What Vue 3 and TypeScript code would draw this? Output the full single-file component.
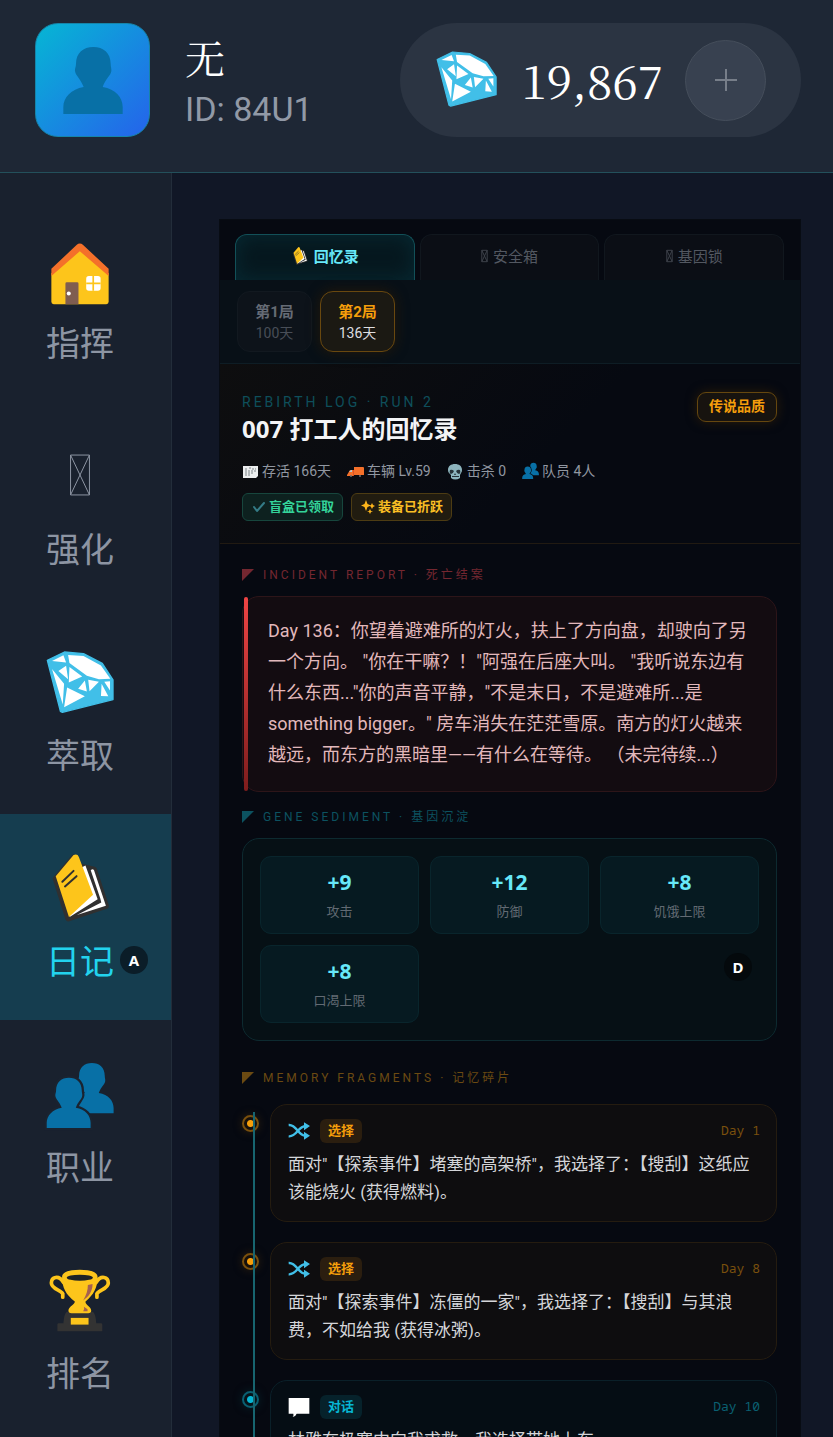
<script setup lang="ts">
interface NavItem { label: string; icon: string; active?: boolean; hint?: string }
interface Entry { kind: 'choice' | 'talk'; tag: string; icon: string; day: number; text: string }

const nav: NavItem[] = [
  { label: '指挥', icon: 'house' },
  { label: '强化', icon: 'tofu' },
  { label: '萃取', icon: 'gem' },
  { label: '日记', icon: 'book', active: true, hint: 'A' },
  { label: '职业', icon: 'people' },
  { label: '排名', icon: 'trophy' },
]
const tabs = [
  { label: '回忆录', icon: 'book', active: true },
  { label: '安全箱', icon: 'tofu', active: false },
  { label: '基因锁', icon: 'tofu', active: false },
]
const runs = [
  { name: '第1局', days: '100天', active: false },
  { name: '第2局', days: '136天', active: true },
]
const meta = [
  { icon: 'calendar', text: '存活 166天' },
  { icon: 'truck', text: '车辆 Lv.59' },
  { icon: 'skull', text: '击杀 0' },
  { icon: 'people', text: '队员 4人' },
]
const genes = [
  { value: '+9', label: '攻击' },
  { value: '+12', label: '防御' },
  { value: '+8', label: '饥饿上限' },
  { value: '+8', label: '口渴上限' },
]
const entries: Entry[] = [
  { kind: 'choice', tag: '选择', icon: 'shuffle', day: 1, text: '面对"【探索事件】堵塞的高架桥"，我选择了：【搜刮】这纸应该能烧火 (获得燃料)。' },
  { kind: 'choice', tag: '选择', icon: 'shuffle', day: 8, text: '面对"【探索事件】冻僵的一家"，我选择了：【搜刮】与其浪费，不如给我 (获得冰粥)。' },
  { kind: 'talk', tag: '对话', icon: 'speech', day: 10, text: '林雅在极寒中向我求救，我选择带她上车。' },
]
</script>

<template>
  <div class="app">
    <svg class="sprite" aria-hidden="true">
      <symbol id="bust" viewBox="188 140 178 201">
        <path d="M278 140C308 140 330 158 330 190C330 200 333 205 332 212C331 225 314 236 306 260C345 266 366 292 366 320V341H188V320C188 292 212 266 249 260C240 236 224 225 223 212C222 205 226 200 226 190C226 158 248 140 278 140Z" fill="#0870a6" />
      </symbol>
      <symbol id="people" viewBox="140 72 204 200" preserveAspectRatio="xMidYMin meet">
        <g fill="#0870a6">
          <path transform="translate(72 -36) scale(.74 .75)" d="M278 140C308 140 330 158 330 190C330 200 333 205 332 212C331 225 314 236 306 260C345 266 366 292 366 320V341H188V320C188 292 212 266 249 260C240 236 224 225 223 212C222 205 226 200 226 190C226 158 248 140 278 140Z" />
          <path class="cut" transform="translate(3 8) scale(.74 .75)" d="M278 140C308 140 330 158 330 190C330 200 333 205 332 212C331 225 314 236 306 260C345 266 366 292 366 320V341H188V320C188 292 212 266 249 260C240 236 224 225 223 212C222 205 226 200 226 190C226 158 248 140 278 140Z" />
        </g>
      </symbol>
      <symbol id="gem" viewBox="140 97 203 186" preserveAspectRatio="xMidYMin meet">
        <path d="M144 122L195 97L252 102L308 131L340 180V239L189 277L183 274Z" fill="#41bfe8" stroke="#41bfe8" stroke-width="4" stroke-linejoin="round" />
        <path fill="#fff" d="M158 124L192 107L200 128ZM206 106L252 109L304 137L332 177L298 178L262 168L210 130ZM177 154L200 138L206 178ZM210 142L248 170L208 188ZM158 148L194 192L190 254ZM203 203L256 229L194 262ZM256 182L262 215L236 207ZM266 180L298 186L270 214ZM306 192L326 229L304 228ZM314 186L331 184V212Z" />
      </symbol>
      <symbol id="house" viewBox="140 62 203 200">
        <path fill="#fdc51b" d="M241 90L327 160V245q0 7-7 7H163q-7 0-7-7V160Z" />
        <path fill="#f4702a" d="M241 71Q246 71 250 75L327 146V168L241 94L156 168V146L232 75Q236 71 241 71Z" />
        <path fill="#7f5d50" d="M198 252V191q0-4 4-4h31q4 0 4 4v61Z" />
        <circle cx="208" cy="220" r="6" fill="#fff" />
        <rect x="260" y="168" width="43" height="44" rx="8" fill="#fff" />
        <path d="M281 168V212M260 190H303" stroke="#fdc51b" stroke-width="5" />
      </symbol>
      <symbol id="tofu" viewBox="0 0 20 40">
        <path d="M1 1H19V39H1L19 1M1 1L19 39M1 1V39" fill="none" stroke="currentColor" stroke-width="1" vector-effect="non-scaling-stroke" />
      </symbol>
      <symbol id="book" viewBox="140 713 203 206">
        <path d="M168 776L222 712L240 738L284 748L320 858L206 896Z" fill="#303030" stroke="#303030" stroke-width="18" stroke-linejoin="round" />
        <path fill="#fff" d="M274 750Q280 744 284 750L320 858L232 886L306 848L303 836ZM246 742L258 736L295 838L210 892Z" />
        <path fill="#fdc51b" d="M168 768L222 704Q234 699 238 710L281 824L208 892Z" />
        <path d="M188 785L222 752M196 799L231 768" stroke="#303030" stroke-width="6" stroke-linecap="round" />
      </symbol>
      <symbol id="trophy" viewBox="140 691 203 196" preserveAspectRatio="xMidYMin meet">
        <path fill="#333" d="M202 816H280Q288 822 290 850H304Q308 850 308 854V874H174V854Q174 850 178 850H192Q194 822 202 816Z" />
        <rect x="214" y="834" width="53" height="20" fill="#fdc51b" />
        <path d="M192 728C178 704 156 712 156 730C156 748 184 750 190 762V772M290 728C304 704 326 712 326 730C326 748 298 750 292 762V772" fill="none" stroke="#fdc51b" stroke-width="11" stroke-linecap="round" />
        <path fill="#fdc51b" d="M188 712C188 696 212 690 241 690S294 696 294 712C294 745 282 765 258 785C256 795 275 800 275 812Q275 820 266 820H216Q207 820 207 812C207 800 226 795 226 785C200 765 188 745 188 712Z" />
        <ellipse cx="241" cy="714" rx="39" ry="9" fill="#1d2226" />
        <path fill="#a56150" d="M265 736L279 733C279 755 268 770 251 782C261 765 265 752 265 736ZM253 801L264 808V814H251Q256 808 253 801Z" />
      </symbol>
      <symbol id="calendar" viewBox="0 0 17 17">
        <path fill="#eceeef" d="M1 3H16V13L14 15H1Z" />
        <path d="M3 6H6M10 6H14M3 8H14M3 10H12M3 12H8M8 4V6" stroke="#7d8588" stroke-width="1" stroke-dasharray="2 1" />
      </symbol>
      <symbol id="truck" viewBox="0 0 17 17">
        <path fill="#f4702a" d="M7 4L16 4Q17 4 17 5V12H7ZM0 12L3 7H6V13H0Z" />
        <path fill="#b8c6ca" d="M2 9L4 7H5V9Z" />
        <path fill="#dc5328" d="M6 7H7V13H6Z" />
        <circle cx="4" cy="13" r="1" fill="#707070" /><circle cx="13" cy="13" r="1" fill="#707070" />
      </symbol>
      <symbol id="skull" viewBox="0 0 17 17">
        <path fill="#8db4bd" d="M8 1C12 1 15 3 15 7Q15 9 14 10L13 12V15Q8 18 4 15V12L2 10Q1 9 1 7C1 3 4 1 8 1Z" />
        <path fill="#263238" d="M3 7Q5 6 7 8Q6 11 4 11Q2 10 3 7ZM13 7Q11 6 9 8Q10 11 12 11Q14 10 13 7ZM8 10L9 12H7ZM5 13H12V14H5Z" />
      </symbol>
      <symbol id="check" viewBox="0 0 14 14">
        <path d="M2 7L5 11L12 3" fill="none" stroke="#347b86" stroke-width="2" stroke-linecap="round" stroke-linejoin="round" />
      </symbol>
      <symbol id="sparkles" viewBox="0 0 14 14">
        <path fill="#fdb51b" d="M5 0L6.500 4L10 5.500L6.500 7L5 11L3.500 7L0 5.500L3.500 4ZM11 3L12 5L14 6L12 7L11 9L10 7L9 6L10 5ZM9 9L10 11L12 11.500L10 12L9 14L8 12L6 11.500L8 11Z" />
      </symbol>
      <symbol id="shuffle" viewBox="0 0 66 48">
        <path d="M2 6C28 4 30 41 54 38M2 40C28 42 28 10 54 9" fill="none" stroke="#41bfe8" stroke-width="7" />
        <path fill="#41bfe8" d="M48 -2L66 9L48 22ZM48 26L66 38L48 50Z" />
      </symbol>
      <symbol id="speech" viewBox="0 0 66 60">
        <path fill="#fff" d="M2 3H64V50H26Q22 60 14 59Q18 56 16 50H2Z" />
      </symbol>
    </svg>

    <header class="topbar">
      <div class="avatar"><svg><use href="#bust" /></svg></div>
      <div class="identity">
        <div class="nick">无</div>
        <div class="uid">ID: 84U1</div>
      </div>
      <div class="wallet">
        <svg class="wallet-gem"><use href="#gem" /></svg>
        <span class="amount">19,867</span>
        <button class="plus" aria-label="充值"><svg viewBox="0 0 22 22"><path d="M11 0V22M0 11H22" /></svg></button>
      </div>
    </header>

    <div class="body">
      <nav class="side">
        <button v-for="n in nav" :key="n.label" class="nav-item" :class="{ active: n.active }">
          <svg class="nav-icon" :class="n.icon"><use :href="'#' + n.icon" /></svg>
          <span class="nav-label">{{ n.label }}</span>
          <span v-if="n.hint" class="key key-nav">{{ n.hint }}</span>
        </button>
      </nav>

      <main class="main">
        <div class="panel">
          <div class="tabs" role="tablist">
            <button v-for="t in tabs" :key="t.label" class="tab" role="tab" :aria-selected="t.active" :class="{ active: t.active }">
              <svg class="tab-icon" :class="t.icon"><use :href="'#' + t.icon" /></svg>{{ t.label }}
            </button>
          </div>
          <div class="runs">
            <button v-for="r in runs" :key="r.name" class="run" :class="{ active: r.active }">
              <strong>{{ r.name }}</strong>
              <span>{{ r.days }}</span>
            </button>
          </div>

          <section class="log">
            <div class="log-head">
              <div>
                <div class="eyebrow">REBIRTH LOG · RUN 2</div>
                <h1>007 打工人的回忆录</h1>
              </div>
              <span class="rarity">传说品质</span>
            </div>
            <ul class="meta">
              <li v-for="m in meta" :key="m.icon"><svg><use :href="'#' + m.icon" /></svg>{{ m.text }}</li>
            </ul>
            <div class="badges">
              <span class="badge green"><svg><use href="#check" /></svg>盲盒已领取</span>
              <span class="badge gold"><svg><use href="#sparkles" /></svg>装备已折跃</span>
            </div>
          </section>

          <div class="content">
            <h2 class="label red"><i></i>INCIDENT REPORT · 死亡结案</h2>
            <p class="incident">Day 136：你望着避难所的灯火，扶上了方向盘，却驶向了另一个方向。 "你在干嘛？！"阿强在后座大叫。 "我听说东边有什么东西..."你的声音平静，"不是末日，不是避难所...是 something bigger。" 房车消失在茫茫雪原。南方的灯火越来越远，而东方的黑暗里——有什么在等待。 （未完待续...）</p>

            <h2 class="label cyan"><i></i>GENE SEDIMENT · 基因沉淀</h2>
            <div class="genes">
              <div v-for="g in genes" :key="g.label" class="gene">
                <strong>{{ g.value }}</strong>
                <span>{{ g.label }}</span>
              </div>
              <span class="key key-panel">D</span>
            </div>

            <h2 class="label amber"><i></i>MEMORY FRAGMENTS · 记忆碎片</h2>
            <ol class="timeline">
              <li v-for="e in entries" :key="e.day" class="entry" :class="e.kind">
                <span class="dot"></span>
                <article class="card">
                  <div class="card-head">
                    <svg><use :href="'#' + e.icon" /></svg>
                    <span class="tag">{{ e.tag }}</span>
                    <time>Day {{ e.day }}</time>
                  </div>
                  <p>{{ e.text }}</p>
                </article>
              </li>
            </ol>
          </div>
        </div>
      </main>
    </div>
  </div>
</template>

<style>
body { margin: 0; background: #111726; }
</style>

<style scoped>
* { box-sizing: border-box; }
button { font: inherit; color: inherit; background: none; border: 0; padding: 0; cursor: pointer; }
h1, h2, p, ul, ol { margin: 0; padding: 0; list-style: none; }
svg { display: block; flex: none; overflow: visible; }
symbol { overflow: visible; }

.app {
  --cut: #1a2330;
  height: 100vh;
  display: flex;
  flex-direction: column;
  overflow: hidden;
  background: #111726;
  color: #fff;
  font-family: Roboto, "Noto Sans CJK SC", sans-serif;
}
.sprite { position: absolute; width: 0; height: 0; overflow: hidden; }
.cut { stroke: var(--cut); stroke-width: 18px; paint-order: stroke; }

.topbar {
  display: flex;
  align-items: center;
  padding: 23px 32px 35px 35px;
  background: #1e2735;
  border-bottom: 1px solid #23505b;
}
.avatar {
  width: 115px;
  height: 114px;
  display: grid;
  place-items: center;
  border: 1px solid #1685a9;
  border-radius: 23px;
  background: linear-gradient(135deg, #06b6d4, #2563eb);
}
.avatar svg { width: 60px; height: 67px; }
.identity { flex: 1; margin-left: 35px; padding-top: 6px; }
.nick { font: 40px/52px "Noto Serif CJK SC", "Liberation Serif", "Noto Sans CJK SC", serif; }
.uid { font-size: 34px; line-height: 52px; color: #9199a6; }
.wallet {
  display: flex;
  align-items: center;
  height: 114px;
  padding: 0 35px 0 36px;
  border-radius: 57px;
  background: #2b3442;
}
.wallet-gem { width: 61px; height: 57px; }
.amount { margin: 0 22px 2px 24px; font: 46px/60px "Noto Serif CJK SC", "Liberation Serif", serif; }
.plus {
  width: 81px;
  height: 81px;
  display: grid;
  place-items: center;
  border: 1px solid #454e5b;
  border-radius: 50%;
  background: #384150;
}
.plus svg { width: 22px; height: 22px; stroke: #777e89; stroke-width: 2px; }

.body { flex: 1; min-height: 0; display: flex; }
.side {
  flex: none;
  width: 172px;
  padding-top: 23px;
  background: #19212e;
  border-right: 1px solid #232d3a;
}
.nav-item {
  position: relative;
  width: 100%;
  height: 206px;
  display: flex;
  flex-direction: column;
  align-items: center;
  gap: 12px;
  padding: 44px 11px 34px 0;
  color: #8d95a3;
}
.nav-item.active { background: #153d4f; color: #22d3ee; }
.nav-icon { width: 68px; height: 68px; }
.nav-icon.tofu { height: 42px; margin: 8px 0 18px; }
.nav-label { font-size: 34px; line-height: 48px; }
.key {
  position: absolute;
  width: 28px;
  height: 28px;
  border-radius: 50%;
  background: #0b1d28;
  color: #fff;
  font: 700 15px/28px "Noto Sans", sans-serif;
  text-align: center;
}
.key-nav { right: 23px; bottom: 46px; }
.key-panel { right: 24px; bottom: 59px; background: #04090c; }

.main { flex: 1; min-width: 0; padding: 46px 32px 0 47px; overflow: hidden; }
.panel { --cut: #0a0c10; background: #060911; border: 1px solid #080c13; }
.tabs { display: grid; grid-template-columns: repeat(3, 1fr); gap: 5px; padding: 14px 16px 0 15px; }
.tab {
  height: 46px;
  display: flex;
  align-items: center;
  justify-content: center;
  gap: 5px;
  padding-bottom: 4px;
  border: 1px solid #11171e;
  border-bottom: 0;
  border-radius: 12px 12px 0 0;
  background: #0b0e15;
  color: #535861;
  font-size: 15px;
}
.tab.active {
  border-color: #125058;
  background: #06181f;
  box-shadow: inset 0 0 20px #072a33;
  color: #67e8f9;
  font-weight: 700;
}
.tab-icon { width: 18px; height: 18px; margin-top: 3px; }
.tab-icon.tofu { width: 7px; height: 12px; margin-top: 1px; opacity: 0.7; }
.runs { display: flex; gap: 8px; padding: 11px 17px; background: #081017; border-bottom: 1px solid #0e1d25; }
.run {
  width: 75px;
  height: 61px;
  display: flex;
  flex-direction: column;
  justify-content: center;
  padding-top: 2px;
  border: 1px solid #121920;
  border-radius: 13px;
  background: #0d131a;
  color: #484e57;
  font-size: 14px;
  line-height: 21px;
}
.run strong { font-size: 15px; color: #656b75; }
.run.active { border-color: #69480f; background: #1b1913; color: #dedee0; box-shadow: 0 0 13px #24190a; }
.run.active strong { color: #f59e0b; }

.log {
  padding: 28px 23px 22px 22px;
  border-bottom: 1px solid #211a12;
  background: linear-gradient(135deg, #0e0e0f 0%, #060911 55%);
}
.log-head { display: flex; justify-content: space-between; align-items: flex-start; }
.eyebrow { font-size: 14px; line-height: 20px; letter-spacing: 3px; color: #0e4f5b; }
h1 { font: 700 24px/34px "Noto Sans", "Noto Sans CJK SC", sans-serif; color: #f3f4f6; }
.rarity {
  height: 30px;
  padding: 0 11px;
  border: 1px solid #65470f;
  border-radius: 9px;
  background: #17130f;
  box-shadow: 0 0 11px #2a1c09;
  color: #f59e0b;
  font-size: 14px;
  font-weight: 700;
  line-height: 26px;
}
.meta { display: flex; gap: 16px; margin-top: 14px; font-size: 14px; line-height: 22px; color: #9197a1; }
.meta li { display: flex; align-items: center; gap: 3px; }
.meta svg { width: 17px; height: 17px; }
.badges { display: flex; gap: 8px; margin-top: 11px; }
.badge {
  height: 28px;
  display: flex;
  align-items: center;
  gap: 3px;
  padding: 0 8px 0 9px;
  border: 1px solid;
  border-radius: 6px;
  font-size: 13px;
  font-weight: 700;
  line-height: 26px;
}
.badge svg { width: 14px; height: 14px; }
.green { border-color: #17463d; background: #0d211f; color: #34d399; }
.gold { border-color: #4d3c13; background: #211c10; color: #fbbf24; }

.content { padding: 20px 23px 32px 22px; }
.label {
  display: flex;
  align-items: center;
  gap: 9px;
  font-size: 12px;
  font-weight: 400;
  line-height: 22px;
  letter-spacing: 3px;
}
.label i { width: 12px; height: 12px; background: currentColor; clip-path: polygon(0 0, 100% 0, 0 100%); }
.red { color: #742730; }
.cyan { color: #0c5260; }
.amber { color: #6b4a12; }
.incident {
  position: relative;
  margin: 10px 0 14px;
  padding: 18px 24px 21px 25px;
  border: 1px solid #2d1519;
  border-radius: 17px;
  background: #130c11;
  color: #e2b8bb;
  font-size: 18px;
  line-height: 31px;
}
.incident::before {
  content: "";
  position: absolute;
  inset: 0 auto 0 1px;
  width: 4px;
  border-radius: 2px;
  background: linear-gradient(#ef4444, #7f1d1d);
}
.genes {
  position: relative;
  display: grid;
  grid-template-columns: repeat(3, 1fr);
  gap: 11px;
  margin: 10px 0 26px;
  padding: 17px;
  border: 1px solid #0d2a30;
  border-radius: 17px;
  background: #061015;
}
.gene {
  height: 78px;
  display: flex;
  flex-direction: column;
  align-items: center;
  justify-content: center;
  gap: 5px;
  border: 1px solid #09252c;
  border-radius: 11px;
  background: #061a21;
}
.gene strong { font: 700 21px/28px "Noto Sans", sans-serif; color: #67e8f9; }
.gene span { font-size: 13px; line-height: 22px; color: #626a73; }

.timeline { position: relative; display: grid; gap: 20px; margin-top: 15px; }
.timeline::after {
  content: "";
  position: absolute;
  inset: 8px auto 0 11px;
  width: 2px;
  background: #176570;
}
.entry { display: flex; gap: 11px; --accent: #f59e0b; --ring: #7a500d; --line: #251c10; --fill: #0e0d0f; --tag: #2b1e0f; --core: #150f0b; }
.entry.talk { --accent: #06b6d4; --ring: #0a6072; --line: #0a2029; --fill: #050d14; --tag: #06222b; --core: #06131a; }
.dot {
  flex: none;
  width: 17px;
  height: 17px;
  margin-top: 11px;
  border: 2px solid var(--ring);
  border-radius: 50%;
  background: radial-gradient(circle, var(--accent) 0 3px, var(--core) 4px);
  box-shadow: 0 0 9px var(--tag);
}
.card { flex: 1; min-width: 0; padding: 14px 16px 15px 17px; border: 1px solid var(--line); border-radius: 17px; background: var(--fill); }
.card-head { display: flex; align-items: center; gap: 10px; margin-bottom: 7px; }
.card-head svg { width: 22px; height: 20px; }
.tag { padding: 0 8px; border-radius: 6px; background: var(--tag); color: var(--accent); font-size: 13px; font-weight: 700; line-height: 24px; }
time { margin-left: auto; padding-bottom: 3px; font: 13px/20px "Noto Sans Mono", "DejaVu Sans Mono", monospace; color: var(--ring); }
.card p { font-size: 17px; line-height: 28px; color: #d4d5d9; }
</style>
